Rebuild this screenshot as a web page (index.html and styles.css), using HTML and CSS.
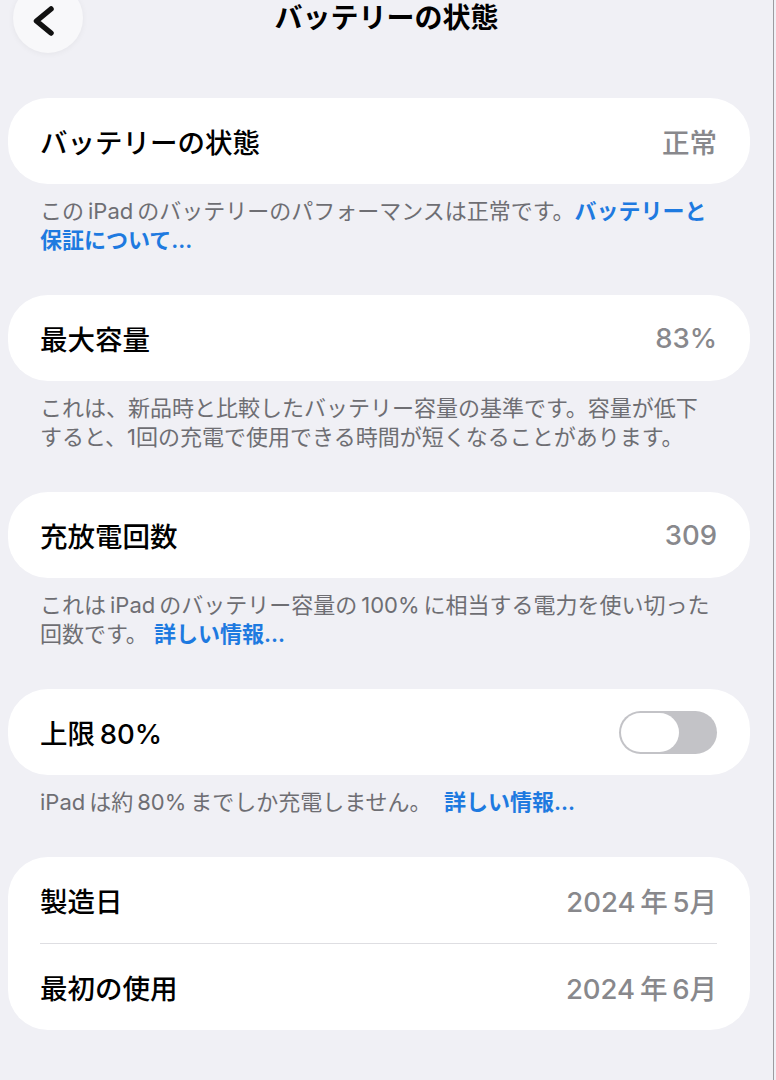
FILE: index.html
```html
<!DOCTYPE html>
<html lang="ja">
<head>
<meta charset="utf-8">
<title>バッテリーの状態</title>
<link rel="stylesheet" href="styles.css">
</head>
<body>
<div class="page">
  <header class="nav">
    <div class="nav-side">
      <button class="back" aria-label="戻る">
        <svg width="70" height="70" viewBox="0 0 70 70"><path d="M38 26 L23.5 38 L38 50" fill="none" stroke="#111" stroke-width="5.5" stroke-linecap="round" stroke-linejoin="round"/></svg>
      </button>
    </div>
    <h1 class="title">バッテリーの状態</h1>
    <div class="nav-side"></div>
  </header>

  <main class="list">
    <section class="group">
      <div class="card">
        <div class="row"><span class="label">バッテリーの状態</span><span class="value">正常</span></div>
      </div>
      <p class="footer">この&#x2009;iPad&#x2009;のバッテリーのパフォーマンスは正常です。<a class="link">バッテリーと<br>保証について...</a></p>
    </section>

    <section class="group">
      <div class="card">
        <div class="row"><span class="label">最大容量</span><span class="value">83%</span></div>
      </div>
      <p class="footer">これは、新品時と比較したバッテリー容量の基準です。容量が低下<br>すると、1回の充電で使用できる時間が短くなることがあります。</p>
    </section>

    <section class="group">
      <div class="card">
        <div class="row"><span class="label">充放電回数</span><span class="value">309</span></div>
      </div>
      <p class="footer">これは&#x2009;iPad&#x2009;のバッテリー容量の&#x2009;100%&#x2009;に相当する電力を使い切った<br>回数です。 <a class="link">詳しい情報...</a></p>
    </section>

    <section class="group">
      <div class="card">
        <div class="row"><span class="label">上限&#x2009;80%</span><span class="switch"><span class="knob"></span></span></div>
      </div>
      <p class="footer">iPad&#x2009;は約&#x2009;80%&#x2009;までしか充電しません。&nbsp; <a class="link">詳しい情報...</a></p>
    </section>

    <section class="group">
      <div class="card">
        <div class="row"><span class="label">製造日</span><span class="value">2024&#x2009;年&#x2009;5月</span></div>
        <div class="row"><span class="label">最初の使用</span><span class="value">2024&#x2009;年&#x2009;6月</span></div>
      </div>
    </section>
  </main>
</div>
</body>
</html>
```

FILE: styles.css
```css
html {
  background: #f0f0f5;
}
body {
  margin: 0;
  font-family: Inter, "Noto Sans CJK JP", sans-serif;
  color: #000;
}
.page {
  width: 773px;
  min-height: 1080px;
  border-right: 1px solid #9c9ca0;
  background: #f0f0f5;
  overflow: hidden;
}
.nav {
  display: grid;
  grid-template-columns: 1fr auto 1fr;
  align-items: center;
  height: 70px;
  margin-top: -17px;
}
.back {
  width: 70px;
  height: 70px;
  margin-left: 13px;
  padding: 0;
  border: 0;
  border-radius: 50%;
  background: #f8f8fa;
  box-shadow: 0 1px 6px rgba(0, 0, 0, 0.05);
  display: flex;
  align-items: center;
  justify-content: center;
}
.title {
  margin: 0;
  font-size: 28px;
  font-weight: 700;
  line-height: 70px;
}
.list {
  padding: 45px 23px 0 8px;
}
.group + .group {
  margin-top: 40px;
}
.card {
  background: #fff;
  border-radius: 40px;
  padding: 0 33px 0 32px;
}
.row {
  height: 86px;
  display: flex;
  align-items: center;
  justify-content: space-between;
}
.row + .row {
  border-top: 1px solid #dedee2;
}
.label {
  font-size: 27.5px;
  font-weight: 500;
}
.value {
  font-size: 27.5px;
  font-weight: 500;
  color: #88888c;
}
.footer {
  margin: 0;
  padding: 13px 20px 0 32px;
  font-size: 22px;
  line-height: 29px;
  color: #6e6e73;
  white-space: nowrap;
}
.link {
  color: #1e7ae0;
  font-weight: 600;
}
.switch {
  box-sizing: border-box;
  width: 98px;
  height: 43px;
  padding: 2px;
  border-radius: 22px;
  background: #c3c3c7;
  display: flex;
}
.knob {
  width: 58px;
  height: 39px;
  border-radius: 20px;
  background: #fff;
}
```
